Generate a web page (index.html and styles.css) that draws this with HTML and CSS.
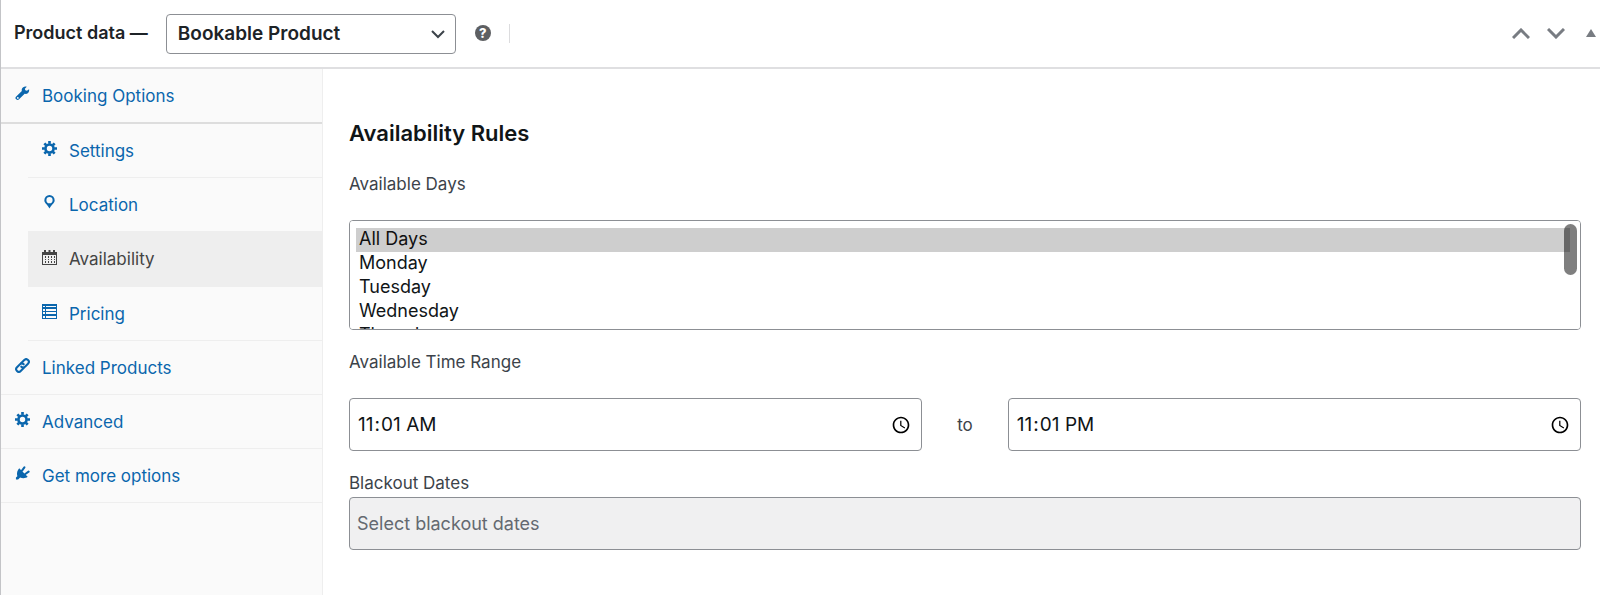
FILE: index.html
```html
<!DOCTYPE html>
<html lang="en-US">
<head>
  <meta charset="UTF-8" />
  <meta name="viewport" content="width=device-width, initial-scale=1.0" />
  <title>Product data</title>
  <link rel="stylesheet" href="styles.css">
</head>
<body>

  <!-- Shared icons -->
  <svg class="sprite" aria-hidden="true">
    <symbol id="gear" viewBox="0 0 16 16">
      <g fill="none" stroke="currentColor">
        <circle cx="8" cy="8" r="4.300" stroke-width="2.800"/>
        <path d="M8 0v3M8 13v3M0 8h3M13 8h3M2.500 2.500l2 2M11.500 11.500l2 2M13.500 2.500l-2 2M4.500 11.500l-2 2" stroke-width="2.800"/>
      </g>
    </symbol>
  </svg>

  <div class="postbox">
    <header class="postbox-header">
      <label class="title" for="product-type">Product data —</label>
      <div class="type-box">
        <select id="product-type">
          <option>Bookable Product</option>
          <option>Simple product</option>
        </select>
        <svg class="arrow" viewBox="0 0 14 9"><path d="M1 1l6 6 6-6" fill="none" stroke="#3c434a" stroke-width="2"/></svg>
      </div>
      <span class="help">?</span>
      <span class="divider"></span>
      <div class="handle-actions">
        <button type="button" aria-label="Move up"><svg width="18" height="11" viewBox="0 0 18 11"><path d="M1 10l8-8 8 8" fill="none" stroke="#787c82" stroke-width="3"/></svg></button>
        <button type="button" aria-label="Move down"><svg width="18" height="11" viewBox="0 0 18 11"><path d="M1 1l8 8 8-8" fill="none" stroke="#787c82" stroke-width="3"/></svg></button>
        <button type="button" aria-label="Toggle panel"><svg width="10" height="11" viewBox="0 0 10 11"><path d="M0 9l5-8 5 8z" fill="#787c82"/></svg></button>
      </div>
    </header>

    <div class="panel-wrap">
      <ul class="tabs">
        <li class="parent">
          <a href="#booking">
            <svg viewBox="0 0 16 16"><path d="M15 3.500l-2.300 1.500-1.700-.5-.500-1.700L12.500.700C10.500 0 8 .900 7.300 3.200c-.2.700-.2 1.400 0 2L1.300 11.200a2 2 0 0 0 0 3 2.100 2.100 0 0 0 3 0l6-5.900c2.700.700 5.400-1.500 4.700-4.800zM3 13.700a1 1 0 1 1 0-2 1 1 0 0 1 0 2z"/></svg>
            Booking Options
          </a>
        </li>
        <li class="sub">
          <a href="#settings"><svg><use href="#gear"/></svg>Settings</a>
        </li>
        <li class="sub">
          <a href="#location">
            <svg viewBox="0 0 16 16"><path fill-rule="evenodd" d="M8 0a5.500 5.500 0 0 0-5.500 5.500C2.500 9 6 10 8 14.500 10 10 13.500 9 13.500 5.500A5.500 5.500 0 0 0 8 0zm0 2.200a3.300 3.300 0 1 1 0 6.600 3.300 3.300 0 0 1 0-6.600z"/></svg>
            Location
          </a>
        </li>
        <li class="sub active">
          <a href="#availability">
            <svg viewBox="0 0 15 15"><path fill-rule="evenodd" d="M0 2h2V0h2v2h2.500V0h2v2H11V0h2v2h2v13H0zM1 5v9h13V5z"/><path d="M3 6h1v2H3zm3 0h1v2H6zm3 0h1v2H9zm3 0h1v2h-1zM3 9h1v1H3zm3 0h1v1H6zm3 0h1v1H9zm3 0h1v1h-1zM3 11h1v2H3zm3 0h1v2H6zm3 0h1v2H9zm3 0h1v2h-1z"/></svg>
            Availability
          </a>
        </li>
        <li class="sub">
          <a href="#pricing">
            <svg viewBox="0 0 15 15"><path fill-rule="evenodd" d="M0 0h15v15H0zM1 2v1h2V2zm3 0v1h10V2zM1 5v2h2V5zm3 0v2h10V5zM1 8v2h2V8zm3 0v2h10V8zM1 12v2h2v-2zm3 0v2h10v-2z"/></svg>
            Pricing
          </a>
        </li>
        <li>
          <a href="#linked">
            <svg viewBox="0 0 16 16"><g fill="none" stroke="currentColor" stroke-width="2.200" stroke-linecap="round" transform="rotate(-45 8 8)"><path d="M7 10.800H2.500a2.800 2.800 0 0 1 0-5.600H7A2.800 2.800 0 0 1 9.800 8"/><path d="M9 5.200h4.500a2.800 2.800 0 0 1 0 5.600H9A2.800 2.800 0 0 1 6.200 8"/></g></svg>
            Linked Products
          </a>
        </li>
        <li>
          <a href="#advanced"><svg><use href="#gear"/></svg>Advanced</a>
        </li>
        <li>
          <a href="#more">
            <svg viewBox="0 0 16 16"><path d="M4.500 2.500l9 9c-2 1.800-5.500 2-8 .800L3.300 14.500H1V12.300l1.500-1.500C1.500 8 2.500 4.500 4.500 2.500z"/><path d="M7.500 5l2.500-3.500M11 8.500l3.500-2.500" fill="none" stroke="currentColor" stroke-width="2.200" stroke-linecap="round"/></svg>
            Get more options
          </a>
        </li>
      </ul>

      <form class="panel">
        <h2>Availability Rules</h2>

        <label for="days">Available Days</label>
        <div class="days-box">
          <select id="days" multiple>
            <option selected>All Days</option>
            <option>Monday</option>
            <option>Tuesday</option>
            <option>Wednesday</option>
            <option>Thursday</option>
            <option>Friday</option>
            <option>Saturday</option>
            <option>Sunday</option>
          </select>
          <span class="thumb"></span>
        </div>

        <label for="time-from">Available Time Range</label>
        <div class="time-range">
          <input type="time" id="time-from" value="11:01">
          <label for="time-to">to</label>
          <input type="time" id="time-to" value="23:01">
        </div>

        <label for="blackout">Blackout Dates</label>
        <input type="text" id="blackout" placeholder="Select blackout dates" readonly>
      </form>
    </div>
  </div>

</body>
</html>
```

FILE: styles.css
```css
* {
  box-sizing: border-box;
}

body {
  margin: 0;
  font-family: Inter, sans-serif;
  font-size: 17px;
  line-height: 24px;
  color: #3c434a;
  background: #fff;
}

.sprite {
  display: none;
}

.postbox {
  display: flex;
  flex-direction: column;
  min-height: 100vh;
  border-left: 1px solid #c3c4c7;
}

/* Header */
.postbox-header {
  display: flex;
  align-items: center;
  height: 69px;
  padding: 0 4px 0 13px;
  border-bottom: 2px solid #dfdfe1;
}

.title {
  margin-right: 18px;
  padding-bottom: 2px;
  font-size: 18px;
  font-weight: 600;
  color: #1d2327;
}

.type-box {
  position: relative;
  width: 290px;
}

.type-box select {
  display: block;
  width: 100%;
  height: 40px;
  padding: 0 11px;
  appearance: none;
  border: 1px solid #8c8f94;
  border-radius: 4px;
  background: #fff;
  font: 600 19px Inter, sans-serif;
  color: #1d2327;
}

.arrow {
  position: absolute;
  top: 16px;
  right: 11px;
  width: 14px;
  height: 9px;
  pointer-events: none;
}

.help {
  width: 16px;
  height: 16px;
  margin: 0 18px 2px 19px;
  border-radius: 50%;
  background: #5d5f62;
  color: #fff;
  font-size: 13px;
  font-weight: 800;
  line-height: 16px;
  text-align: center;
}

.divider {
  width: 1px;
  height: 19px;
  background: #dcdcde;
}

.handle-actions {
  display: flex;
  align-items: center;
  gap: 17px;
  margin-left: auto;
}

.handle-actions button {
  display: flex;
  padding: 0;
  border: 0;
  background: none;
  cursor: pointer;
}

.handle-actions button:last-child {
  margin-left: 4px;
}

/* Tabs */
.panel-wrap {
  display: flex;
  flex: 1;
}

.tabs {
  flex: 0 0 322px;
  margin: 0;
  padding: 0;
  list-style: none;
  background: #fafafa;
  border-right: 1px solid #eee;
}

.tabs a {
  display: flex;
  align-items: center;
  gap: 12px;
  height: 54px;
  padding: 0 14px;
  border-bottom: 1px solid #eee;
  color: #0a66ad;
  text-decoration: none;
}

.tabs svg {
  width: 15px;
  height: 15px;
  margin-bottom: 4px;
  fill: currentColor;
}

.tabs .parent a {
  height: 55px;
  border-bottom: 2px solid #ddd;
}

.tabs .sub {
  margin-left: 27px;
}

.tabs .active a {
  height: 55px;
  background: #eee;
  color: #444;
}

/* Availability panel */
.panel {
  flex: 1;
  display: flex;
  flex-direction: column;
  min-width: 0;
  padding: 48px 19px 40px 26px;
}

.panel h2 {
  margin: 0 0 23px;
  font-size: 22px;
  line-height: 32px;
  font-weight: 600;
  color: #101517;
}

.panel input,
.panel select {
  width: 100%;
  border: 1px solid #8c8f94;
  border-radius: 4px;
  background: #fff;
  color: #101517;
  font-family: Inter, sans-serif;
  font-size: 18px;
}

.panel input {
  height: 53px;
  padding: 0 7px;
}

.days-box {
  position: relative;
  margin: 24px 0 20px;
}

.days-box select {
  display: block;
  height: 110px;
  padding: 7px 10px 0 6px;
  scrollbar-width: none;
}

.days-box option {
  min-height: 24px;
  padding: 0 3px;
  line-height: 24px;
}

.thumb {
  position: absolute;
  top: 4px;
  right: 4px;
  width: 13px;
  height: 51px;
  border-radius: 7px;
  background: rgba(0, 0, 0, 0.5);
  pointer-events: none;
}

.time-range {
  display: flex;
  align-items: center;
  gap: 35px;
  margin: 24px 0 20px;
}

.time-range input {
  flex: 1;
  font-size: 19px;
}

.time-range input::-webkit-calendar-picker-indicator {
  width: 20px;
  height: 20px;
  padding: 0;
  margin-right: 3px;
  background-size: 20px 20px;
}

.panel #blackout {
  margin-top: 2px;
  background: #f0f0f1;
}

#blackout::placeholder {
  color: #646970;
}
```
